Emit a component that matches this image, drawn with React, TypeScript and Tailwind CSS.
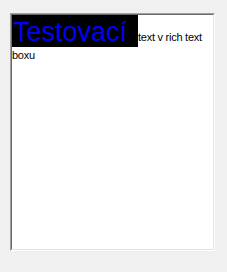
export default function App() {
  return (
    <div className="w-[227px] h-[272px] bg-[#f0f0f0] pl-[10px] pt-[13px]">
      {/* sunken rich text box */}
      <div className="w-[205px] h-[238px] border border-t-[#a0a0a0] border-l-[#a0a0a0] border-r-white border-b-white">
        <div className="h-full bg-white border border-t-[#696969] border-l-[#696969] border-r-[#e3e3e3] border-b-[#e3e3e3]">
          <div
            className="text-[11px] leading-[14px] tracking-[-0.25px] text-black"
            style={{ fontFamily: '"Liberation Sans", Arial, sans-serif' }}
          >
            <span className="inline-block w-[126px] h-[32px] mb-[1px] pl-[1px] pt-[2px] text-[27px] leading-[30px] tracking-normal bg-black text-[#0000ff]">
              Testovací
            </span>
            text v rich text boxu
          </div>
        </div>
      </div>
    </div>
  )
}
